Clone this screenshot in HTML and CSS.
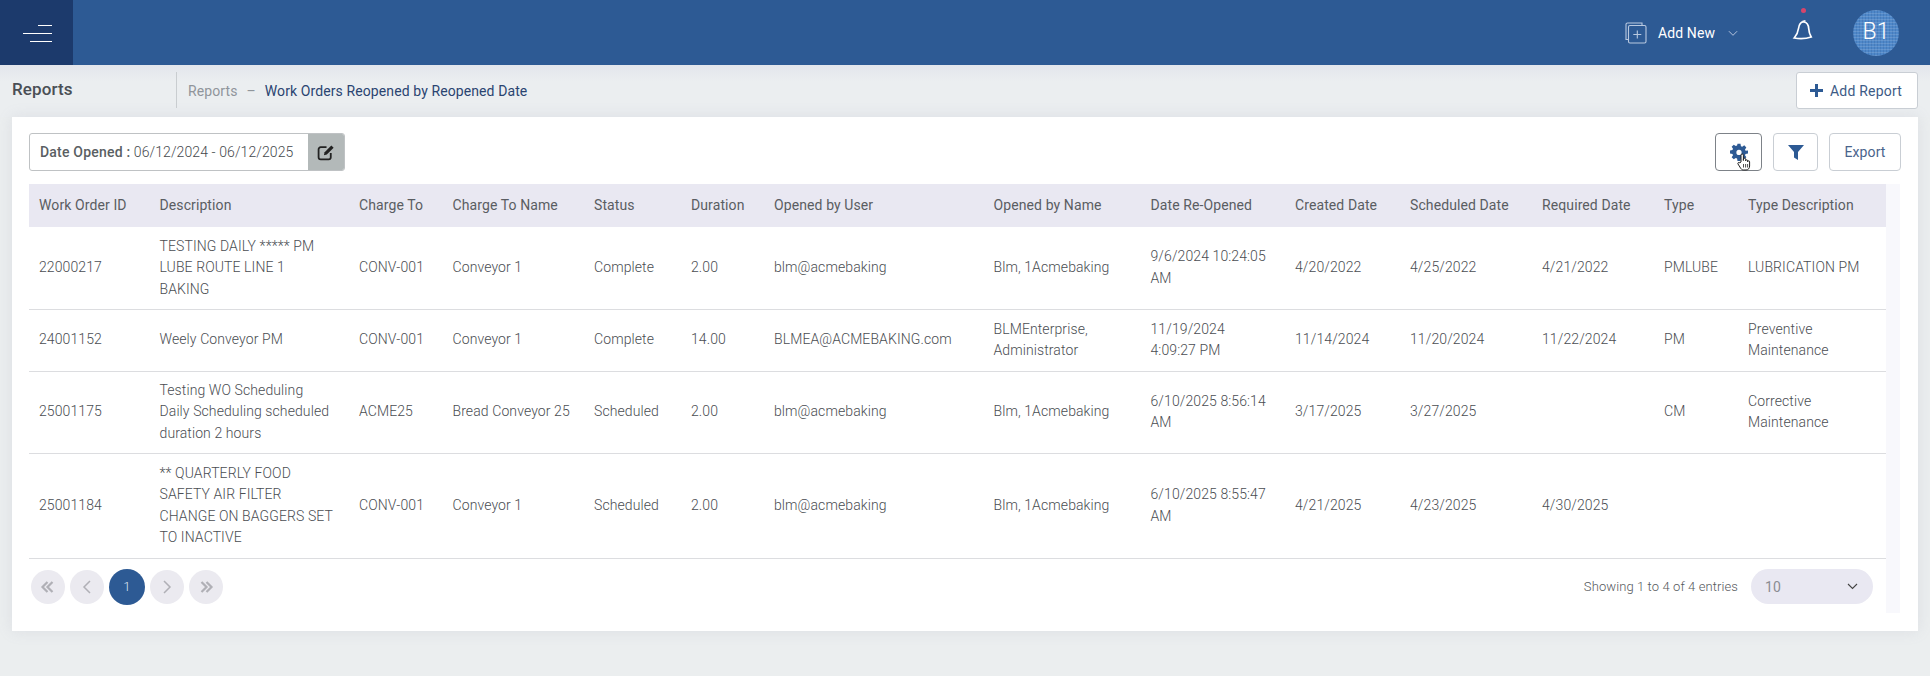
FILE: index.html
```html
<!DOCTYPE html>
<html lang="en">
<head>
<meta charset="utf-8">
<title>Reports</title>
<link rel="stylesheet" href="styles.css">
</head>
<body>
<header class="topbar">
  <div class="menu-box">
    <div class="burger"><span class="b1"></span><span class="b2"></span><span class="b3"></span></div>
  </div>
  <div class="top-right">
    <div class="add-new">
      <svg class="add-icon" width="22" height="22" viewBox="0 0 22 22" fill="none" stroke="#b9c9e0" stroke-width="1.1"><path d="M3.500 17.500H1V2.500A1.500 1.500 0 0 1 2.500 1H17v2.500"/><rect x="3.500" y="3.500" width="17.500" height="17.500" rx="1.500" fill="#2d5a94"/><path d="M12.300 8.500v8M8.300 12.500h8"/></svg>
      <span>Add New</span>
      <svg class="chev" width="10" height="7" viewBox="0 0 11 7" fill="none" stroke="#c3d0e4" stroke-width="1"><path d="M1 1l4.500 4.500L10 1"/></svg>
    </div>
    <div class="bell-wrap">
      <span class="dot"></span>
      <svg width="22" height="24" viewBox="0 0 22 24" fill="none" stroke="#fff" stroke-width="1.700"><path d="M12 3c3 .5 4.500 3 4.700 6.500.2 3.500 1 6 2.500 8.500-4.500 1.500-11 2-17 1 2.500-2.800 3.800-5.800 4.300-9.500C7 6 8.500 2.500 12 3z"/><path d="M10.500 2.500l3-.8"/></svg>
    </div>
    <div class="avatar">B1</div>
  </div>
</header>

<div class="subbar">
  <h1 class="page-title">Reports</h1>
  <nav class="crumbs">
    <span class="crumb-root">Reports</span>
    <span class="crumb-sep">–</span>
    <span class="crumb-cur">Work Orders Reopened by Reopened Date</span>
  </nav>
  <button class="add-report"><span class="plus"></span>Add Report</button>
</div>

<main class="card">
  <div class="toolbar">
    <div class="date-box">
      <div class="date-text"><b>Date Opened :</b> 06/12/2024 - 06/12/2025</div>
      <div class="date-edit">
        <svg width="18" height="17" viewBox="0 0 17 16" fill="none" stroke="#222" stroke-width="1.700"><path d="M13 8.500V12.500A2 2 0 0 1 11 14.500H3.500A2 2 0 0 1 1.500 12.500V5A2 2 0 0 1 3.500 3H9"/><path d="M6.500 10.500l.7-2.800L13.500 1.300l2.200 2.200L9.300 9.800z" fill="#222" stroke="none"/></svg>
      </div>
    </div>
    <div class="tools">
      <button class="tool tool-gear">
        <svg class="gear" width="18" height="18" viewBox="0 0 24 24" fill="#2d5a94"><path fill-rule="evenodd" d="M10 1h4l.6 3.200 1.700.7 2.700-1.800 2.800 2.800-1.800 2.700.7 1.700L24 10v4l-3.300.6-.7 1.700 1.800 2.700-2.800 2.800-2.700-1.800-1.700.7L14 24h-4l-.6-3.300-1.700-.7L5 21.800 2.200 19 4 16.300l-.7-1.700L0 14v-4l3.300-.6.700-1.700L2.200 5 5 2.200l2.700 1.800 1.700-.7zM12 9a3.500 3.500 0 1 0 0 7 3.500 3.500 0 0 0 0-7z"/></svg>
        <svg class="hand" width="14" height="18" viewBox="0 0 14 18" fill="#fff" stroke="#222" stroke-width="1"><path d="M4 9V2.200a1.200 1.200 0 0 1 2.400 0V7.500V6.300a1.100 1.100 0 0 1 2.200 0v1.500a1 1 0 0 1 2 0v1a1 1 0 0 1 2 0V13c0 2.200-1.300 4-3.500 4H6.500C5 17 4.200 16 3.500 15L1 11c-.7-1.200 1-2.300 1.800-1.200z"/><path d="M6.500 11v3.500M8.600 11v3.500M10.600 11v3.500" fill="none" stroke-width=".8"/></svg>
      </button>
      <button class="tool tool-filter">
        <svg width="16" height="15" viewBox="0 0 16 15" fill="#2d5a94"><path d="M0 0h16L10 7v8L6 12.500V7z"/></svg>
      </button>
      <button class="tool tool-export">Export</button>
    </div>
  </div>

  <div class="table-area">
    <div class="table-main">
      <table class="grid">
        <colgroup>
          <col class="c1"><col class="c2"><col class="c3"><col class="c4"><col class="c5"><col class="c6"><col class="c7"><col class="c8"><col class="c9"><col class="c10"><col class="c11"><col class="c12"><col class="c13"><col class="c14">
        </colgroup>
        <thead>
          <tr><th>Work Order ID</th><th>Description</th><th>Charge To</th><th>Charge To Name</th><th>Status</th><th>Duration</th><th>Opened by User</th><th>Opened by Name</th><th>Date Re-Opened</th><th>Created Date</th><th>Scheduled Date</th><th>Required Date</th><th>Type</th><th>Type Description</th></tr>
        </thead>
        <tbody>
          <tr class="r82"><td>22000217</td><td>TESTING DAILY ***** PM LUBE ROUTE LINE 1 BAKING</td><td>CONV-001</td><td>Conveyor 1</td><td>Complete</td><td>2.00</td><td>blm@acmebaking</td><td>Blm, 1Acmebaking</td><td>9/6/2024 10:24:05 AM</td><td>4/20/2022</td><td>4/25/2022</td><td>4/21/2022</td><td>PMLUBE</td><td>LUBRICATION PM</td></tr>
          <tr class="r62"><td>24001152</td><td>Weely Conveyor PM</td><td>CONV-001</td><td>Conveyor 1</td><td>Complete</td><td>14.00</td><td>BLMEA@ACMEBAKING.com</td><td>BLMEnterprise, Administrator</td><td>11/19/2024 4:09:27 PM</td><td>11/14/2024</td><td>11/20/2024</td><td>11/22/2024</td><td>PM</td><td>Preventive Maintenance</td></tr>
          <tr class="r82"><td>25001175</td><td>Testing WO Scheduling Daily Scheduling scheduled duration 2 hours</td><td>ACME25</td><td>Bread Conveyor 25</td><td>Scheduled</td><td>2.00</td><td>blm@acmebaking</td><td>Blm, 1Acmebaking</td><td>6/10/2025 8:56:14 AM</td><td>3/17/2025</td><td>3/27/2025</td><td></td><td>CM</td><td>Corrective Maintenance</td></tr>
          <tr class="r105"><td>25001184</td><td>** QUARTERLY FOOD SAFETY AIR FILTER CHANGE ON BAGGERS SET TO INACTIVE</td><td>CONV-001</td><td>Conveyor 1</td><td>Scheduled</td><td>2.00</td><td>blm@acmebaking</td><td>Blm, 1Acmebaking</td><td>6/10/2025 8:55:47 AM</td><td>4/21/2025</td><td>4/23/2025</td><td>4/30/2025</td><td></td><td></td></tr>
        </tbody>
      </table>
      <div class="pager-row">
        <div class="pager">
          <span class="pg">
            <svg width="16" height="12" viewBox="0 0 16 12" fill="none" stroke="#b0b0b6" stroke-width="2.200"><path d="M7.500 1L2.500 6l5 5M12.500 1L7.500 6l5 5"/></svg>
          </span>
          <span class="pg">
            <svg width="10" height="14" viewBox="0 0 10 14" fill="none" stroke="#b0b0b6" stroke-width="1.500"><path d="M8 1L2 7l6 6"/></svg>
          </span>
          <span class="pg pg-active">1</span>
          <span class="pg">
            <svg width="10" height="14" viewBox="0 0 10 14" fill="none" stroke="#b0b0b6" stroke-width="1.500"><path d="M2 1l6 6-6 6"/></svg>
          </span>
          <span class="pg">
            <svg width="16" height="12" viewBox="0 0 16 12" fill="none" stroke="#b0b0b6" stroke-width="2.200"><path d="M3.500 1l5 5-5 5M8.500 1l5 5-5 5"/></svg>
          </span>
        </div>
        <div class="pager-info">
          <span class="entries">Showing 1 to 4 of 4 entries</span>
          <div class="page-size">
            <span>10</span>
            <svg width="11" height="7" viewBox="0 0 11 7" fill="none" stroke="#444" stroke-width="1.100"><path d="M1 1l4.500 4.500L10 1"/></svg>
          </div>
        </div>
      </div>
    </div>
    <div class="scroll-track"></div>
  </div>
</main>
</body>
</html>
```
FILE: styles.css
```css
* { box-sizing: border-box; }
html, body { margin: 0; padding: 0; }
body {
  width: 1930px;
  height: 676px;
  overflow: hidden;
  background: #ebeeef;
  font-family: Roboto, "Liberation Sans", sans-serif;
  font-size: 14px;
  letter-spacing: .1px;
  color: #555;
}
.topbar {
  height: 65px;
  background: #2d5a94;
  display: flex;
  justify-content: space-between;
  align-items: stretch;
}
.menu-box {
  width: 73px;
  background: #1c3a6c;
  display: flex;
  align-items: center;
  justify-content: center;
}
.burger {
  width: 29px;
  height: 17px;
  margin-top: 2px;
  margin-left: 1px;
  display: flex;
  flex-direction: column;
  justify-content: space-between;
  align-items: flex-end;
}
.burger span { display: block; height: 1px; background: #fff; }
.b1 { width: 14px; }
.b2 { width: 29px; }
.b3 { width: 22px; }
.top-right {
  display: flex;
  align-items: center;
  padding-right: 31px;
}
.add-new {
  display: flex;
  align-items: center;
  color: #fff;
  font-size: 14px;
}
.add-icon { margin-right: 11px; margin-top: 1px; }
.add-new span { width: 70px; }
.chev { margin-top: 1px; margin-right: 1px; }
.bell-wrap {
  position: relative;
  margin-left: 53px;
  width: 22px;
  height: 24px;
  margin-top: -3px;
}
.bell-wrap svg { display: block; }
.dot {
  position: absolute;
  top: -11px;
  left: 9px;
  width: 5px;
  height: 5px;
  border-radius: 50%;
  background: #d6456b;
}
.avatar {
  margin-left: 39px;
  width: 46px;
  height: 46px;
  border-radius: 50%;
  display: flex;
  align-items: center;
  justify-content: center;
  color: #fff;
  font-size: 23px;
  font-weight: 300;
  padding-bottom: 2px;
  background-color: #4f88c9;
  background-image:
    repeating-linear-gradient(0deg, rgba(255,255,255,.13) 0 1px, transparent 1px 3px),
    repeating-linear-gradient(90deg, rgba(20,60,120,.16) 0 1px, transparent 1px 3px);
}
.subbar {
  height: 52px;
  display: flex;
  align-items: flex-start;
  background: linear-gradient(#e3e6ec, #ebeef0 16px);
  padding-left: 12px;
  padding-right: 12px;
}
.page-title {
  width: 164px;
  margin: 14px 0 0;
  font-size: 17px;
  line-height: 20px;
  font-weight: 500;
  color: #4a4f55;
}
.crumbs {
  margin-top: 7px;
  height: 36px;
  border-left: 1px solid #c9cdd0;
  padding-left: 11px;
  padding-top: 1px;
  display: flex;
  align-items: center;
  font-size: 14px;
  flex: 1;
}
.crumb-root { color: #90959b; }
.crumb-sep { color: #90959b; margin: 0 9px; }
.crumb-cur { color: #2a4470; }
.add-report {
  margin-top: 7px;
  width: 122px;
  height: 37px;
  background: #fff;
  border: 1px solid #c9ced4;
  border-radius: 3px;
  display: flex;
  align-items: center;
  justify-content: center;
  font: 14px Roboto, sans-serif;
  letter-spacing: .2px;
  color: #3d5a85;
  padding: 0;
}
.plus {
  position: relative;
  width: 13px;
  height: 13px;
  margin-right: 7px;
  margin-left: -2px;
  background:
    linear-gradient(#2d5a94, #2d5a94) center / 13px 3px no-repeat,
    linear-gradient(#2d5a94, #2d5a94) center / 3px 13px no-repeat;
}
.card {
  margin: 0 12px;
  width: 1906px;
  height: 514px;
  background: #fff;
  box-shadow: 0 0 14px rgba(140, 145, 165, .16);
  padding: 16px 17px 0;
}
.toolbar {
  display: flex;
  justify-content: space-between;
  height: 38px;
  margin-bottom: 13px;
}
.date-box {
  width: 316px;
  height: 38px;
  border: 1px solid #bfc2c4;
  border-radius: 3px;
  display: flex;
  overflow: hidden;
}
.date-text {
  flex: 1;
  padding-left: 10px;
  line-height: 36px;
  font-size: 14px;
  font-weight: 300;
  color: #45494d;
  white-space: nowrap;
}
.date-text b { font-weight: 500; color: #5a5f63; letter-spacing: .2px; }
.date-edit {
  width: 36px;
  background: #b3b9b9;
  display: flex;
  align-items: center;
  justify-content: center;
}
.tools {
  display: flex;
  gap: 11px;
  padding-right: 0;
}
.tool {
  height: 38px;
  padding: 0;
  background: #fff;
  border: 1px solid #c9ced4;
  border-radius: 4px;
  display: flex;
  align-items: center;
  justify-content: center;
  font: 14px Roboto, sans-serif;
  letter-spacing: .1px;
  color: #4a648c;
}
.tool-gear { position: relative; width: 47px; border-color: #7d8288; }
.tool-filter { width: 45px; }
.tool-export { width: 72px; }
.hand { position: absolute; left: 21px; top: 19px; }
.table-area { display: flex; height: 429px; }
.table-main { width: 1857px; }
.scroll-track { width: 14px; background: #f8f8fc; }
.grid {
  width: 1857px;
  table-layout: fixed;
  border-collapse: collapse;
  line-height: 21.500px;
  font-size: 14px;
  font-weight: 300;
  color: #4a4d52;
}
.c1 { width: 120.500px; }
.c2 { width: 199.500px; }
.c3 { width: 93.500px; }
.c4 { width: 141.500px; }
.c5 { width: 97px; }
.c6 { width: 83px; }
.c7 { width: 219.500px; }
.c8 { width: 157px; }
.c9 { width: 144.500px; }
.c10 { width: 115px; }
.c11 { width: 132px; }
.c12 { width: 122px; }
.c13 { width: 84px; }
.c14 { width: 148px; }
.grid th {
  background: #e9e8f2;
  height: 43px;
  padding: 0 10px;
  text-align: left;
  font-weight: 400;
  color: #5a5d62;
  white-space: nowrap;
}
.grid td {
  padding: 8px 10px;
  border-bottom: 1px solid #dcdde0;
  vertical-align: middle;
}
.r82 td { height: 82px; }
.r62 td { height: 62px; }
.r105 td { height: 105px; }
.grid td:nth-child(2) { padding-right: 13px; }
.grid td:nth-child(9) { padding-right: 14px; }
.pager-row {
  height: 55px;
  display: flex;
  justify-content: space-between;
  align-items: center;
  padding: 1px 13px 0 2px;
}
.pager { display: flex; align-items: center; gap: 5px; }
.pg {
  width: 34px;
  height: 34px;
  border-radius: 50%;
  background: #ebeaf0;
  display: flex;
  align-items: center;
  justify-content: center;
}
.pg-active {
  width: 36px;
  height: 36px;
  background: #2d5a94;
  color: #dfe7f3;
  font-size: 13px;
  font-weight: 300;
}
.pager-info { display: flex; align-items: center; }
.entries { font-size: 13px; font-weight: 300; color: #55585c; margin-right: 13px; }
.page-size {
  width: 122px;
  height: 35px;
  border-radius: 18px;
  background: #e9e8f2;
  display: flex;
  align-items: center;
  justify-content: space-between;
  padding: 0 15px 0 14px;
  color: #8b8d92;
}
```
